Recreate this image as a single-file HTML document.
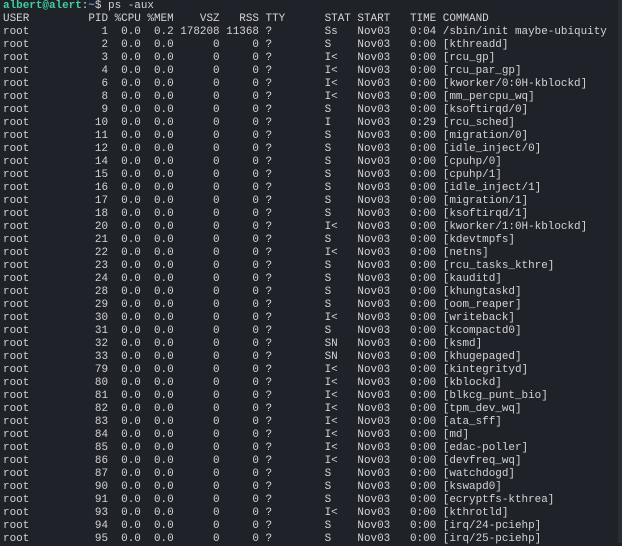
<!DOCTYPE html>
<html><head><meta charset="utf-8"><style>
html,body{margin:0;padding:0;background:#1f2229;width:622px;height:543px;overflow:hidden}
pre{margin:0;position:absolute;left:3px;top:0px;font-family:"Liberation Mono",monospace;font-size:10.95px;line-height:13px;color:#d4d4d4}
.u{color:#3fcf9f;font-weight:bold}.p{color:#5a9cf0;font-weight:bold}
.edge{position:absolute;right:0;top:0;width:4px;height:543px;background:#2a2d35}
</style></head><body><pre><span class="u">albert@alert</span>:<span class="p">~</span>$ ps -aux
USER         PID %CPU %MEM    VSZ   RSS TTY      STAT START   TIME COMMAND
root           1  0.0  0.2 178208 11368 ?        Ss   Nov03   0:04 /sbin/init maybe-ubiquity
root           2  0.0  0.0      0     0 ?        S    Nov03   0:00 [kthreadd]
root           3  0.0  0.0      0     0 ?        I&lt;   Nov03   0:00 [rcu_gp]
root           4  0.0  0.0      0     0 ?        I&lt;   Nov03   0:00 [rcu_par_gp]
root           6  0.0  0.0      0     0 ?        I&lt;   Nov03   0:00 [kworker/0:0H-kblockd]
root           8  0.0  0.0      0     0 ?        I&lt;   Nov03   0:00 [mm_percpu_wq]
root           9  0.0  0.0      0     0 ?        S    Nov03   0:00 [ksoftirqd/0]
root          10  0.0  0.0      0     0 ?        I    Nov03   0:29 [rcu_sched]
root          11  0.0  0.0      0     0 ?        S    Nov03   0:00 [migration/0]
root          12  0.0  0.0      0     0 ?        S    Nov03   0:00 [idle_inject/0]
root          14  0.0  0.0      0     0 ?        S    Nov03   0:00 [cpuhp/0]
root          15  0.0  0.0      0     0 ?        S    Nov03   0:00 [cpuhp/1]
root          16  0.0  0.0      0     0 ?        S    Nov03   0:00 [idle_inject/1]
root          17  0.0  0.0      0     0 ?        S    Nov03   0:00 [migration/1]
root          18  0.0  0.0      0     0 ?        S    Nov03   0:00 [ksoftirqd/1]
root          20  0.0  0.0      0     0 ?        I&lt;   Nov03   0:00 [kworker/1:0H-kblockd]
root          21  0.0  0.0      0     0 ?        S    Nov03   0:00 [kdevtmpfs]
root          22  0.0  0.0      0     0 ?        I&lt;   Nov03   0:00 [netns]
root          23  0.0  0.0      0     0 ?        S    Nov03   0:00 [rcu_tasks_kthre]
root          24  0.0  0.0      0     0 ?        S    Nov03   0:00 [kauditd]
root          28  0.0  0.0      0     0 ?        S    Nov03   0:00 [khungtaskd]
root          29  0.0  0.0      0     0 ?        S    Nov03   0:00 [oom_reaper]
root          30  0.0  0.0      0     0 ?        I&lt;   Nov03   0:00 [writeback]
root          31  0.0  0.0      0     0 ?        S    Nov03   0:00 [kcompactd0]
root          32  0.0  0.0      0     0 ?        SN   Nov03   0:00 [ksmd]
root          33  0.0  0.0      0     0 ?        SN   Nov03   0:00 [khugepaged]
root          79  0.0  0.0      0     0 ?        I&lt;   Nov03   0:00 [kintegrityd]
root          80  0.0  0.0      0     0 ?        I&lt;   Nov03   0:00 [kblockd]
root          81  0.0  0.0      0     0 ?        I&lt;   Nov03   0:00 [blkcg_punt_bio]
root          82  0.0  0.0      0     0 ?        I&lt;   Nov03   0:00 [tpm_dev_wq]
root          83  0.0  0.0      0     0 ?        I&lt;   Nov03   0:00 [ata_sff]
root          84  0.0  0.0      0     0 ?        I&lt;   Nov03   0:00 [md]
root          85  0.0  0.0      0     0 ?        I&lt;   Nov03   0:00 [edac-poller]
root          86  0.0  0.0      0     0 ?        I&lt;   Nov03   0:00 [devfreq_wq]
root          87  0.0  0.0      0     0 ?        S    Nov03   0:00 [watchdogd]
root          90  0.0  0.0      0     0 ?        S    Nov03   0:00 [kswapd0]
root          91  0.0  0.0      0     0 ?        S    Nov03   0:00 [ecryptfs-kthrea]
root          93  0.0  0.0      0     0 ?        I&lt;   Nov03   0:00 [kthrotld]
root          94  0.0  0.0      0     0 ?        S    Nov03   0:00 [irq/24-pciehp]
root          95  0.0  0.0      0     0 ?        S    Nov03   0:00 [irq/25-pciehp]
</pre><div class="edge"></div></body></html>
